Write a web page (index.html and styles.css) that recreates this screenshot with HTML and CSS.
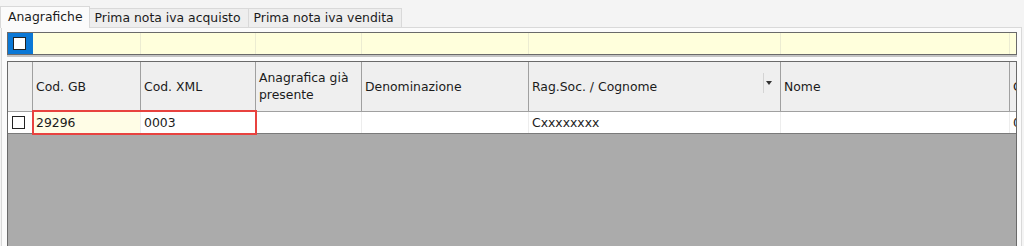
FILE: index.html
```html
<!DOCTYPE html>
<html lang="it">
<head>
  <meta charset="UTF-8" />
  <title>Import anagrafiche</title>
  <link rel="stylesheet" href="styles.css">
</head>
<body>
  <div id="tabs">
    <div class="tab active">Anagrafiche</div>
    <div class="tab">Prima nota iva acquisto</div>
    <div class="tab">Prima nota iva vendita</div>
  </div>

  <div id="panel">
    <div id="filter-row">
      <div class="fcell c0"><span class="check"></span></div>
      <div class="fcell c1"></div>
      <div class="fcell c2"></div>
      <div class="fcell c3"></div>
      <div class="fcell c4"></div>
      <div class="fcell c5"></div>
      <div class="fcell c6"></div>
      <div class="fcell c7"></div>
    </div>

    <div id="grid">
      <div class="row head">
        <div class="cell c0"></div>
        <div class="cell c1">Cod. GB</div>
        <div class="cell c2">Cod. XML</div>
        <div class="cell c3">Anagrafica già<br>presente</div>
        <div class="cell c4">Denominazione</div>
        <div class="cell c5">Rag.Soc. / Cognome <span class="sort"><span class="arrow"></span></span></div>
        <div class="cell c6">Nome</div>
        <div class="cell c7">Codice fiscale</div>
      </div>
      <div class="row data">
        <div class="cell c0"><span class="check"></span></div>
        <div class="cell c1 current">29296</div>
        <div class="cell c2">0003</div>
        <div class="cell c3"></div>
        <div class="cell c4"></div>
        <div class="cell c5">Cxxxxxxxx</div>
        <div class="cell c6"></div>
        <div class="cell c7">0</div>
        <div class="highlight"></div>
      </div>
      <div class="empty"></div>
    </div>
  </div>
</body>
</html>
```

FILE: styles.css
```css
:root {
  --page: #f4f4f4;
  --panel: #fbfbfb;
  --tab: #eeeeee;
  --tab-border: #d9d9d9;
  --frame: #6a6a6a;
  --filter: #ffffdc;
  --head: #efefef;
  --line: #a0a0a0;
  --empty: #ababab;
  --blue: #0b78d6;
  --red: #e8423f;
  --text: #1b1b1b;
}

* { margin: 0; padding: 0; box-sizing: border-box; }

html, body {
  width: 100%;
  height: 100%;
  overflow: hidden;
}

body {
  background: var(--page);
  font-family: "DejaVu Sans", Verdana, sans-serif;
  font-size: 12.4px;
  color: var(--text);
  display: flex;
  flex-direction: column;
}

/* Tabs */
#tabs {
  display: flex;
  align-items: flex-end;
  height: 27px;
}

.tab {
  height: 19px;
  line-height: 18px;
  padding: 0 7px 0 5px;
  background: var(--tab);
  border: 1px solid var(--tab-border);
  border-bottom: none;
  border-left: none;
  white-space: nowrap;
}

.tab.active {
  position: relative;
  z-index: 1;
  height: 22px;
  line-height: 20px;
  margin-bottom: -1px;
  padding: 0 6px 0 7px;
  background: var(--panel);
  border-left: 1px solid var(--tab-border);
}

/* Panel */
#panel {
  flex: 1;
  display: flex;
  flex-direction: column;
  margin: 0 2px 0 1px;
  padding: 4px 4px 0 5px;
  background: var(--panel);
  border: 1px solid var(--tab-border);
  border-bottom: none;
  min-height: 0;
}

/* column widths (each includes its 1px divider) */
.c0 { width: 25px; }
.c1 { width: 108px; }
.c2 { width: 115px; }
.c3 { width: 106px; }
.c4 { width: 167px; }
.c5 { width: 252px; }
.c6 { width: 229px; }
.c7 { flex: 1; min-width: 0; }

#filter-row {
  display: flex;
  height: 23px;
  background: var(--filter);
  border: 1px solid var(--frame);
  box-shadow: 0 2px 0 #c4c4c4;
}

.fcell {
  border-right: 1px solid #ececd2;
}

.fcell.c0 {
  background: var(--blue);
  border-right: none;
  display: flex;
  align-items: center;
  padding-left: 5px;
}

.fcell.c7 { border-right: none; }

.check {
  display: block;
  width: 13px;
  height: 13px;
  background: #fff;
  border: 1px solid #222;
}

/* Grid */
#grid {
  flex: 1;
  display: flex;
  flex-direction: column;
  margin-top: 6px;
  border: 1px solid var(--frame);
  border-bottom: none;
  background: var(--empty);
  min-height: 0;
}

.row {
  display: flex;
  position: relative;
}

.cell {
  overflow: hidden;
  white-space: nowrap;
  padding-left: 3px;
}

.row.head {
  height: 50px;
  background: var(--head);
  border-bottom: 1px solid var(--line);
}

.row.head .cell {
  display: flex;
  align-items: center;
  border-right: 1px solid var(--line);
  line-height: 17px;
}

.row.head .cell.c3 {
  white-space: normal;
  align-items: flex-start;
  padding-top: 7px;
}

.row.head .cell.c5 {
  position: relative;
}

.sort {
  position: absolute;
  right: 7px;
  top: 11px;
  width: 10px;
  height: 20px;
  border-left: 1px solid #d4d4d4;
  display: flex;
  align-items: center;
  justify-content: center;
}

.arrow {
  width: 0;
  height: 0;
  border-left: 3.5px solid transparent;
  border-right: 3.5px solid transparent;
  border-top: 4px solid #333;
}

.row.head .cell.c7 { border-right: none; }

.row.data {
  height: 22px;
  background: #fff;
  border-bottom: 1px solid #7a7a7a;
}

.row.data .cell {
  display: flex;
  align-items: center;
  border-right: 1px solid #ededed;
}

.row.data .cell.c0 {
  padding-left: 4px;
}

.row.data .cell.current {
  background: #fffde6;
}

.row.data .cell.c7 { border-right: none; }

.highlight {
  position: absolute;
  left: 24px;
  top: -2px;
  width: 225px;
  height: 25px;
  border: 2px solid var(--red);
  pointer-events: none;
}

.empty {
  flex: 1;
}
```
